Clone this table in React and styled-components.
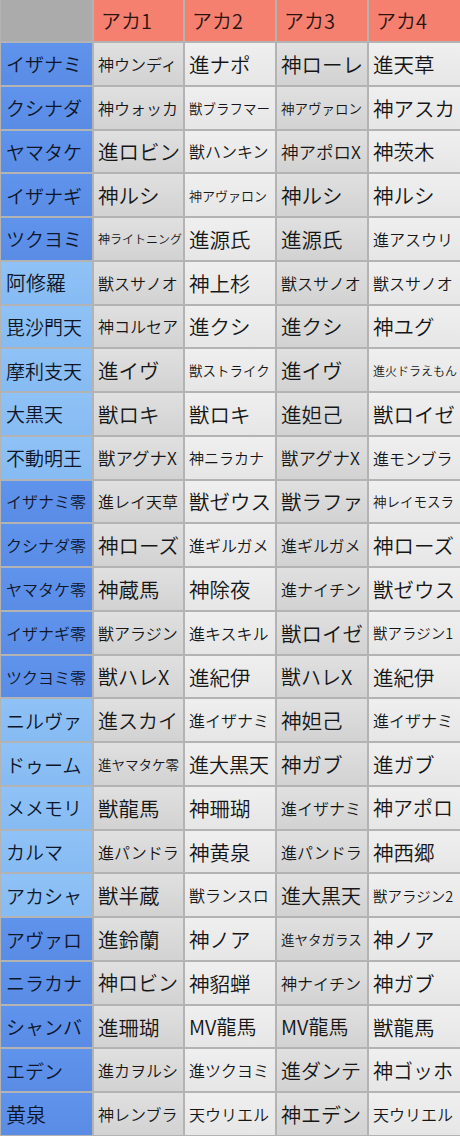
import React from "react";
import styled, { createGlobalStyle, css } from "styled-components";

const Global = createGlobalStyle`
  html, body { margin: 0; padding: 0; background: #b4b4b4; }
  body { font-family: "Noto Sans CJK JP", "Noto Sans", sans-serif; }
`;

const Table = styled.div`
  display: grid;
  grid-template-columns: 91px 89px 90px 90px 1fr;
  grid-template-rows: 41px repeat(25, 1fr);
  gap: 2px;
  width: 460px;
  height: 1136px;
  box-sizing: border-box;
  padding: 0 0 1px 1px;
  background: #b3b3b3;
`;

const Cell = styled.div`
  display: flex;
  align-items: center;
  padding-left: 5px;
  white-space: nowrap;
  overflow: hidden;
  color: #161616;
  font-weight: 350;
  font-size: ${(p) => p.$size || 20}px;
`;

const Corner = styled(Cell)`
  background: #ababab;
`;

const HeadCell = styled(Cell)`
  background: #f6806f;
  padding-left: 7px;
  color: #2a1410;
`;

const NameCell = styled(Cell)`
  padding-left: 5px;
  color: #0e1628;
  ${(p) =>
    p.$light
      ? css`background: linear-gradient(#8fc2f6, #86bbf3);`
      : css`background: linear-gradient(#5f93ec, #5a8ce6);`}
`;

const DataCell = styled(Cell)`
  padding-left: 4px;
  ${(p) =>
    p.$dark
      ? css`background: linear-gradient(#e0e0e0, #d2d2d2);`
      : css`background: linear-gradient(#efefef, #e6e6e6);`}
`;

const heads = ["アカ1", "アカ2", "アカ3", "アカ4"];

const L = 20.5;
const M = 16;
const S = 13.5;
const XS = 12;
const X = 17.5;

const rows = [
  ["イザナミ", 19, [["神ウンディ", M], ["進ナポ", L], ["神ローレ", L], ["進天草", L]]],
  ["クシナダ", 19, [["神ウォッカ", M], ["獣ブラフマー", S], ["神アヴァロン", S], ["神アスカ", L]]],
  ["ヤマタケ", 19, [["進ロビン", L], ["獣ハンキン", M], ["神アポロX", X], ["神茨木", L]]],
  ["イザナギ", 19, [["神ルシ", L], ["神アヴァロン", 13], ["神ルシ", L], ["神ルシ", L]]],
  ["ツクヨミ", 19, [["神ライトニング", XS], ["進源氏", L], ["進源氏", L], ["進アスウリ", M]]],
  ["阿修羅", 20, [["獣スサノオ", M], ["神上杉", L], ["獣スサノオ", M], ["獣スサノオ", M]]],
  ["毘沙門天", 19, [["神コルセア", M], ["進クシ", L], ["進クシ", L], ["神ユグ", L]]],
  ["摩利支天", 19, [["進イヴ", L], ["獣ストライク", S], ["進イヴ", L], ["進火ドラえもん", XS]]],
  ["大黒天", 19, [["獣ロキ", L], ["獣ロキ", L], ["進妲己", L], ["獣ロイゼ", L]]],
  ["不動明王", 19, [["獣アグナX", X], ["神ニラカナ", 15], ["獣アグナX", X], ["進モンブラ", M]]],
  ["イザナミ零", 16, [["進レイ天草", M], ["獣ゼウス", L], ["獣ラファ", L], ["神レイモスラ", S]]],
  ["クシナダ零", 16, [["神ローズ", L], ["進ギルガメ", M], ["進ギルガメ", M], ["神ローズ", L]]],
  ["ヤマタケ零", 16, [["神蔵馬", L], ["神除夜", L], ["進ナイチン", M], ["獣ゼウス", L]]],
  ["イザナギ零", 16, [["獣アラジン", M], ["進キスキル", M], ["獣ロイゼ", L], ["獣アラジン1", 14.5]]],
  ["ツクヨミ零", 16, [["獣ハレX", 20], ["進紀伊", L], ["獣ハレX", 20], ["進紀伊", L]]],
  ["ニルヴァ", 19, [["進スカイ", 20], ["進イザナミ", M], ["神妲己", L], ["進イザナミ", M]]],
  ["ドゥーム", 19, [["進ヤマタケ零", S], ["進大黒天", 20], ["神ガブ", L], ["進ガブ", L]]],
  ["メメモリ", 19, [["獣龍馬", L], ["神珊瑚", L], ["進イザナミ", M], ["神アポロ", 20]]],
  ["カルマ", 19, [["進パンドラ", M], ["神黄泉", L], ["進パンドラ", M], ["神西郷", L]]],
  ["アカシャ", 19, [["獣半蔵", L], ["獣ランスロ", M], ["進大黒天", 20], ["獣アラジン2", 14.5]]],
  ["アヴァロ", 19, [["進鈴蘭", L], ["神ノア", L], ["進ヤタガラス", S], ["神ノア", L]]],
  ["ニラカナ", 19, [["神ロビン", 20], ["神貂蝉", L], ["神ナイチン", M], ["神ガブ", L]]],
  ["シャンバ", 19, [["進珊瑚", L], ["MV龍馬", 20], ["MV龍馬", 20], ["獣龍馬", L]]],
  ["エデン", 19, [["進カヲルシ", M], ["進ツクヨミ", M], ["進ダンテ", 20], ["神ゴッホ", 20]]],
  ["黄泉", 20, [["神レンブラ", M], ["天ウリエル", M], ["神エデン", 20], ["天ウリエル", M]]],
];

export default function App() {
  return (
    <>
      <Global />
      <Table>
        <Corner />
        {heads.map((h) => (
          <HeadCell key={h} $size={20}>{h}</HeadCell>
        ))}
        {rows.map(([name, ns, cells], i) => (
          <React.Fragment key={name + i}>
            <NameCell $size={ns} $light={Math.floor(i / 5) % 2 === 1}>
              {name}
            </NameCell>
            {cells.map(([t, s], j) => (
              <DataCell key={j} $size={s} $dark={j % 2 === 0}>
                {t}
              </DataCell>
            ))}
          </React.Fragment>
        ))}
      </Table>
    </>
  );
}
